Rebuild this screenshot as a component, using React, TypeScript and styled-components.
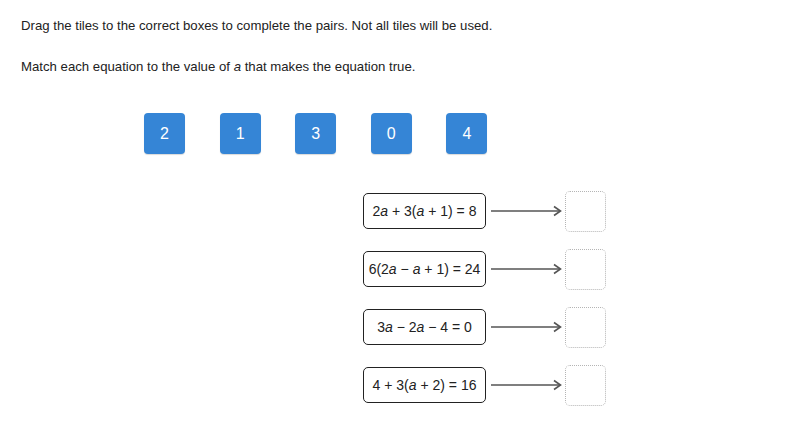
import styled, { createGlobalStyle } from 'styled-components';

const GlobalStyle = createGlobalStyle`
  body {
    margin: 0;
    background: #ffffff;
    font-family: "Liberation Sans", Arial, sans-serif;
    color: #222222;
  }
`;

const tiles = ['2', '1', '3', '0', '4'];

type Part = { text: string; italic?: boolean };

const equations: Part[][] = [
  [{ text: '2' }, { text: 'a', italic: true }, { text: ' + 3(' }, { text: 'a', italic: true }, { text: ' + 1) = 8' }],
  [{ text: '6(2' }, { text: 'a', italic: true }, { text: ' \u2212 ' }, { text: 'a', italic: true }, { text: ' + 1) = 24' }],
  [{ text: '3' }, { text: 'a', italic: true }, { text: ' \u2212 2' }, { text: 'a', italic: true }, { text: ' \u2212 4 = 0' }],
  [{ text: '4 + 3(' }, { text: 'a', italic: true }, { text: ' + 2) = 16' }],
];

const Arrow = () => (
  <svg width="72" height="12" viewBox="0 0 72 12">
    <line x1="0" y1="6" x2="69" y2="6" stroke="#555" strokeWidth="1.3" />
    <polyline points="63,1.5 69.5,6 63,10.5" fill="none" stroke="#555" strokeWidth="1.6" />
  </svg>
);

const App: React.FC = () => {
  return (
    <Page>
      <GlobalStyle />
      <Instruction>Drag the tiles to the correct boxes to complete the pairs. Not all tiles will be used.</Instruction>
      <Instruction>
        Match each equation to the value of <Var>a</Var> that makes the equation true.
      </Instruction>
      <TileRow>
        {tiles.map((t) => (
          <Tile key={t}>{t}</Tile>
        ))}
      </TileRow>
      <Pairs>
        {equations.map((parts, i) => (
          <PairRow key={i}>
            <Equation>
              {parts.map((p, j) => (p.italic ? <Var key={j}>{p.text}</Var> : <span key={j}>{p.text}</span>))}
            </Equation>
            <Arrow />
            <DropBox />
          </PairRow>
        ))}
      </Pairs>
    </Page>
  );
};

const Page = styled.div`
  width: 800px;
  height: 426px;
  padding: 18px 0 0 21px;
  box-sizing: border-box;
`;

const Instruction = styled.p`
  margin: 0 0 25px;
  font-size: 13.2px;
  line-height: 16px;
`;

const Var = styled.i`
  font-style: italic;
`;

const TileRow = styled.div`
  display: flex;
  gap: 34.6px;
  margin: 38px 0 0 123px;
`;

const Tile = styled.div`
  width: 41px;
  height: 41px;
  border-radius: 4px;
  background: #3585d6;
  color: #ffffff;
  font-size: 16px;
  display: flex;
  align-items: center;
  justify-content: center;
  box-shadow: 0 1px 1px rgba(0, 0, 0, 0.15);
`;

const Pairs = styled.div`
  display: flex;
  flex-direction: column;
  gap: 20px;
  margin: 38px 0 0 342px;
`;

const PairRow = styled.div`
  display: flex;
  align-items: center;
  height: 38px;
`;

const Equation = styled.div`
  width: 123px;
  height: 36px;
  box-sizing: border-box;
  border: 1.5px solid #222;
  border-radius: 5px;
  display: flex;
  align-items: center;
  justify-content: center;
  font-size: 14px;
  white-space: pre;
  margin-right: 5px;
`;

const DropBox = styled.div`
  width: 41px;
  height: 41px;
  box-sizing: border-box;
  margin-left: 2px;
  border: 1px dotted #b5b5b5;
  border-radius: 5px;
`;

export default App;
